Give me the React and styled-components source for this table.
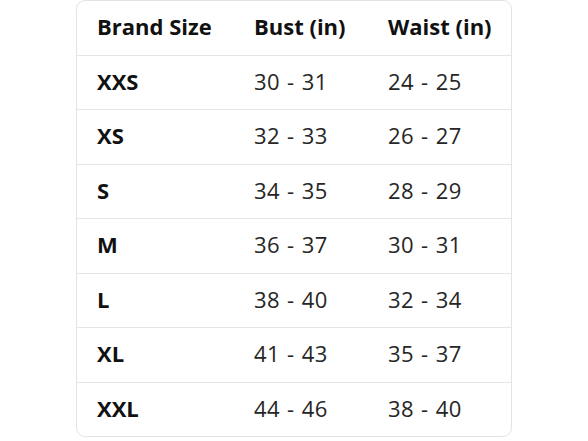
import React from 'react';
import styled, { createGlobalStyle } from 'styled-components';

const Global = createGlobalStyle`
  html, body {
    margin: 0;
    padding: 0;
    background: #ffffff;
  }
  body {
    font-family: "Open Sans", "Noto Sans", sans-serif;
  }
`;

const Page = styled.div`
  width: 588px;
  height: 441px;
  display: flex;
  justify-content: center;
  align-items: flex-start;
`;

const Card = styled.div`
  width: 434px;
  border: 1px solid #e3e3e3;
  border-radius: 9px;
  overflow: hidden;
  background: #fff;
`;

const Row = styled.div`
  display: grid;
  grid-template-columns: 157px 134px 1fr;
  height: 53.5px;
  align-items: center;
  border-bottom: 1px solid #e6e6e6;
  &:last-child {
    border-bottom: none;
  }
`;

const Cell = styled.div`
  padding: 0 0 3px 20px;
  font-size: 22px;
  font-weight: ${(p) => (p.$bold ? 700 : 400)};
  color: ${(p) => (p.$bold ? '#111111' : '#262626')};
  letter-spacing: ${(p) => (p.$bold ? '0' : '0.4px')};
  word-spacing: ${(p) => (p.$bold ? '0' : '1px')};
  white-space: nowrap;
`;

const sizes = [
  ['XXS', '30 - 31', '24 - 25'],
  ['XS', '32 - 33', '26 - 27'],
  ['S', '34 - 35', '28 - 29'],
  ['M', '36 - 37', '30 - 31'],
  ['L', '38 - 40', '32 - 34'],
  ['XL', '41 - 43', '35 - 37'],
  ['XXL', '44 - 46', '38 - 40'],
];

export default function App() {
  return (
    <>
      <Global />
      <Page>
        <Card>
          <Row>
            <Cell $bold>Brand Size</Cell>
            <Cell $bold>Bust (in)</Cell>
            <Cell $bold>Waist (in)</Cell>
          </Row>
          {sizes.map(([size, bust, waist]) => (
            <Row key={size}>
              <Cell $bold>{size}</Cell>
              <Cell>{bust}</Cell>
              <Cell>{waist}</Cell>
            </Row>
          ))}
        </Card>
      </Page>
    </>
  );
}
